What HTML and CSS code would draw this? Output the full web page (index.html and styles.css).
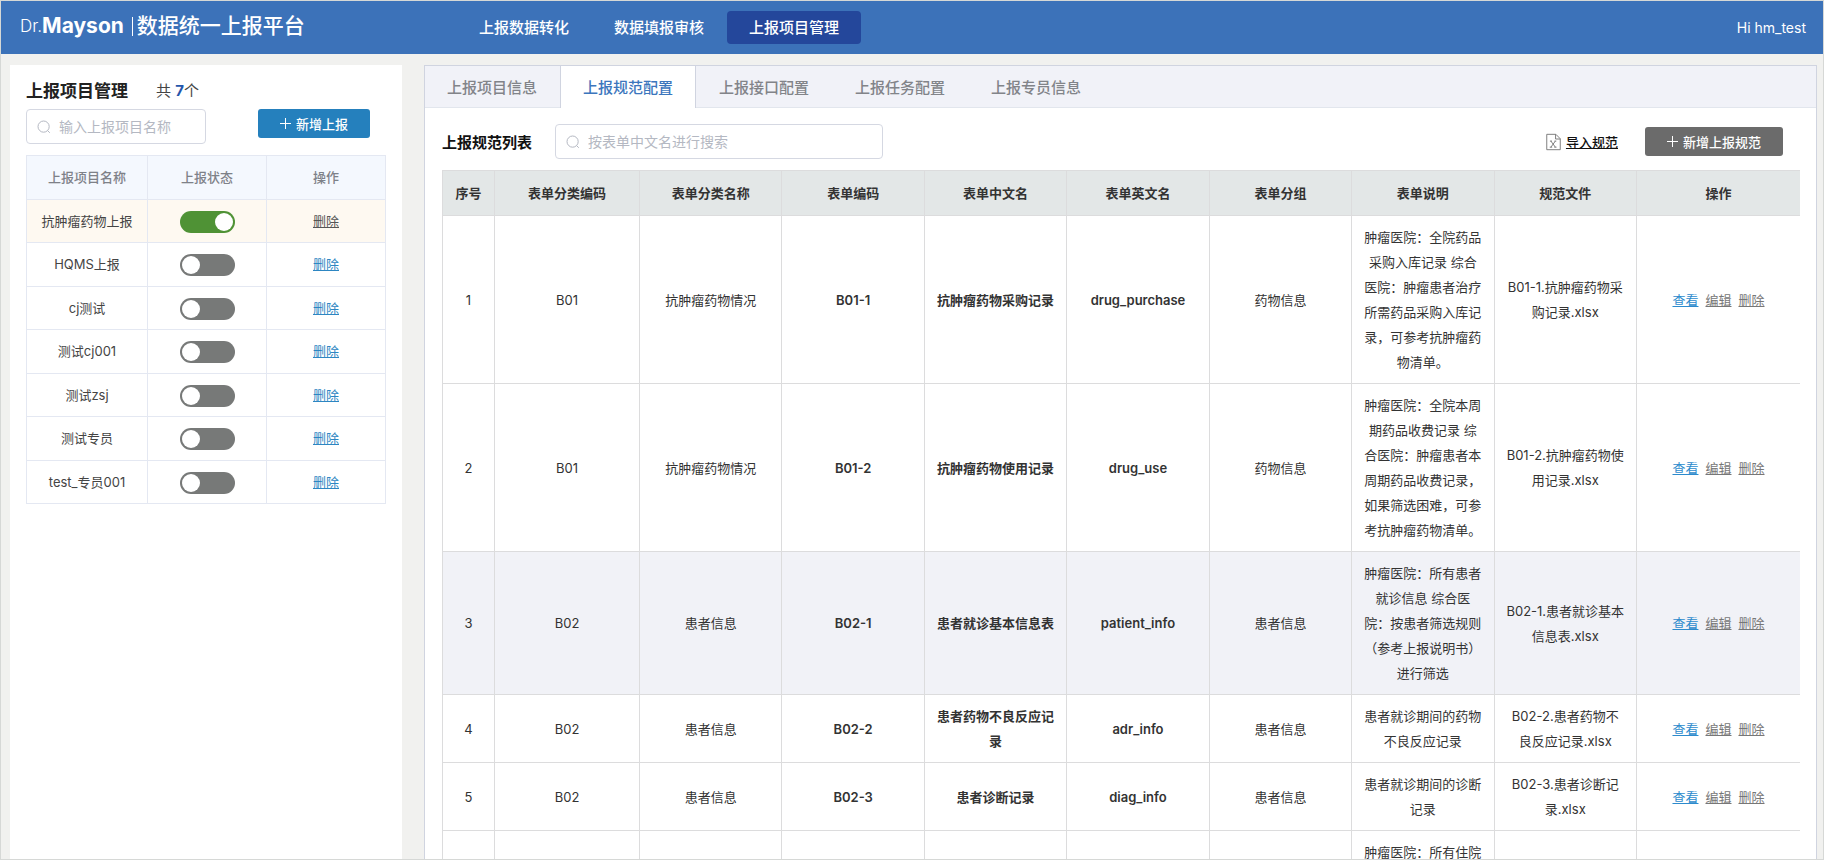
FILE: index.html
```html
<!DOCTYPE html>
<html lang="zh-CN">
<head>
<meta charset="utf-8">
<meta name="viewport" content="width=device-width, initial-scale=1">
<title>Dr.Mayson 数据统一上报平台</title>
<link rel="stylesheet" href="styles.css">
</head>
<body>
<div class="app">
  <header class="topbar">
    <div class="brand"><span class="brand-dr">Dr.</span><strong class="brand-name">Mayson</strong><span class="brand-line"></span><span class="brand-title">数据统一上报平台</span></div>
    <nav class="nav">
      <a class="nav-item" href="#">上报数据转化</a>
      <a class="nav-item" href="#">数据填报审核</a>
      <a class="nav-item nav-active" href="#">上报项目管理</a>
    </nav>
    <span class="user">Hi hm_test</span>
  </header>

  <div class="content">
    <aside class="side">
      <div class="side-head">
        <h1 class="side-title">上报项目管理</h1>
        <span class="side-count">共 <b class="num">7</b>个</span>
      </div>
      <div class="side-tools">
        <label class="search search-side">
          <svg class="search-icon" viewBox="0 0 14 14" aria-hidden="true"><circle cx="6.6" cy="6.6" r="5.6"/><path d="M10.6 10.6L12.8 12.8"/></svg>
          <input class="search-input" type="text" placeholder="输入上报项目名称" aria-label="输入上报项目名称">
        </label>
        <button class="btn btn-blue" type="button"><svg class="plus" viewBox="0 0 11 11" aria-hidden="true"><path d="M5.5 0V11M0 5.5H11"/></svg>新增上报</button>
      </div>
      <table class="projects">
        <colgroup><col class="p-name"><col><col></colgroup>
        <thead><tr><th>上报项目名称</th><th>上报状态</th><th>操作</th></tr></thead>
        <tbody>
          <tr class="current"><td>抗肿瘤药物上报</td><td><input class="switch" type="checkbox" checked aria-label="抗肿瘤药物上报"></td><td><a class="link" href="#">删除</a></td></tr>
          <tr><td>HQMS上报</td><td><input class="switch" type="checkbox" aria-label="HQMS上报"></td><td><a class="link" href="#">删除</a></td></tr>
          <tr><td>cj测试</td><td><input class="switch" type="checkbox" aria-label="cj测试"></td><td><a class="link" href="#">删除</a></td></tr>
          <tr><td>测试cj001</td><td><input class="switch" type="checkbox" aria-label="测试cj001"></td><td><a class="link" href="#">删除</a></td></tr>
          <tr><td>测试zsj</td><td><input class="switch" type="checkbox" aria-label="测试zsj"></td><td><a class="link" href="#">删除</a></td></tr>
          <tr><td>测试专员</td><td><input class="switch" type="checkbox" aria-label="测试专员"></td><td><a class="link" href="#">删除</a></td></tr>
          <tr><td>test_专员001</td><td><input class="switch" type="checkbox" aria-label="test_专员001"></td><td><a class="link" href="#">删除</a></td></tr>
        </tbody>
      </table>
    </aside>

    <main class="main">
      <div class="tabs" role="tablist">
        <button class="tab" type="button" role="tab">上报项目信息</button>
        <button class="tab tab-active" type="button" role="tab" aria-selected="true">上报规范配置</button>
        <button class="tab" type="button" role="tab">上报接口配置</button>
        <button class="tab" type="button" role="tab">上报任务配置</button>
        <button class="tab" type="button" role="tab">上报专员信息</button>
      </div>
      <div class="toolbar">
        <h2 class="list-title">上报规范列表</h2>
        <label class="search search-main">
          <svg class="search-icon" viewBox="0 0 14 14" aria-hidden="true"><circle cx="6.6" cy="6.6" r="5.6"/><path d="M10.6 10.6L12.8 12.8"/></svg>
          <input class="search-input" type="text" placeholder="按表单中文名进行搜索" aria-label="按表单中文名进行搜索">
        </label>
        <a class="import" href="#"><svg class="file-icon" viewBox="0 0 16 18" aria-hidden="true"><path d="M.8.8H10.5L15.2 5.5V17.2H.8ZM10.2.8V5.8H15.2"/><path d="M5.2 8L10 14.5M10 8L5.2 14.5M4 14.5H6.6M8.8 14.5H11.2M4.2 8H6.4M9 8H11"/></svg><span class="import-text">导入规范</span></a>
        <button class="btn btn-gray" type="button"><svg class="plus" viewBox="0 0 11 11" aria-hidden="true"><path d="M5.5 0V11M0 5.5H11"/></svg>新增上报规范</button>
      </div>
      <table class="specs">
        <colgroup><col class="s-index"><col class="s-code"><col><col><col><col><col><col><col><col class="s-ops"></colgroup>
        <thead><tr><th>序号</th><th>表单分类编码</th><th>表单分类名称</th><th>表单编码</th><th>表单中文名</th><th>表单英文名</th><th>表单分组</th><th>表单说明</th><th>规范文件</th><th>操作</th></tr></thead>
        <tbody>
          <tr><td>1</td><td>B01</td><td>抗肿瘤药物情况</td><td class="strong">B01-1</td><td class="strong">抗肿瘤药物采购记录</td><td class="strong">drug_purchase</td><td>药物信息</td><td>肿瘤医院：全院药品采购入库记录 综合医院：肿瘤患者治疗所需药品采购入库记录，可参考抗肿瘤药物清单。</td><td>B01-1.抗肿瘤药物采购记录.xlsx</td><td><div class="ops"><a class="view" href="#">查看</a><a href="#">编辑</a><a href="#">删除</a></div></td></tr>
          <tr><td>2</td><td>B01</td><td>抗肿瘤药物情况</td><td class="strong">B01-2</td><td class="strong">抗肿瘤药物使用记录</td><td class="strong">drug_use</td><td>药物信息</td><td>肿瘤医院：全院本周期药品收费记录 综合医院：肿瘤患者本周期药品收费记录，如果筛选困难，可参考抗肿瘤药物清单。</td><td>B01-2.抗肿瘤药物使用记录.xlsx</td><td><div class="ops"><a class="view" href="#">查看</a><a href="#">编辑</a><a href="#">删除</a></div></td></tr>
          <tr class="hovered"><td>3</td><td>B02</td><td>患者信息</td><td class="strong">B02-1</td><td class="strong">患者就诊基本信息表</td><td class="strong">patient_info</td><td>患者信息</td><td>肿瘤医院：所有患者就诊信息 综合医院：按患者筛选规则（参考上报说明书）进行筛选</td><td>B02-1.患者就诊基本信息表.xlsx</td><td><div class="ops"><a class="view" href="#">查看</a><a href="#">编辑</a><a href="#">删除</a></div></td></tr>
          <tr><td>4</td><td>B02</td><td>患者信息</td><td class="strong">B02-2</td><td class="strong">患者药物不良反应记录</td><td class="strong">adr_info</td><td>患者信息</td><td>患者就诊期间的药物不良反应记录</td><td>B02-2.患者药物不良反应记录.xlsx</td><td><div class="ops"><a class="view" href="#">查看</a><a href="#">编辑</a><a href="#">删除</a></div></td></tr>
          <tr><td>5</td><td>B02</td><td>患者信息</td><td class="strong">B02-3</td><td class="strong">患者诊断记录</td><td class="strong">diag_info</td><td>患者信息</td><td>患者就诊期间的诊断记录</td><td>B02-3.患者诊断记录.xlsx</td><td><div class="ops"><a class="view" href="#">查看</a><a href="#">编辑</a><a href="#">删除</a></div></td></tr>
          <tr><td></td><td></td><td></td><td></td><td></td><td></td><td></td><td>肿瘤医院：所有住院</td><td></td><td></td></tr>
        </tbody>
      </table>
    </main>
  </div>
</div>
</body>
</html>
```
FILE: styles.css
```css
* { box-sizing: border-box; }

body {
  margin: 0;
  font-family: Inter, "Noto Sans CJK SC", sans-serif;
  font-size: 13px;
  color: #333;
}

button, input { font-family: inherit; }

.app {
  display: flex;
  flex-direction: column;
  height: 100vh;
  overflow: hidden;
  border: 1px solid #d6d8d6;
  background: #f1f1ef;
}

/* Top bar */
.topbar {
  display: flex;
  align-items: center;
  flex: none;
  height: 53px;
  padding: 0 17px 0 19px;
  background: #3c72b9;
  color: #fff;
}

.brand {
  display: flex;
  align-items: center;
  width: 437px;
  padding-bottom: 3px;
  line-height: 28px;
}

.brand-dr { font-size: 17px; font-weight: 300; }
.brand-name { font-size: 21px; }
.brand-line { width: 1px; height: 19px; margin: 0 4px 0 8px; background: #fff; }
.brand-title { font-size: 21px; font-weight: 500; }

.nav { display: flex; flex: 1; gap: 1px; }

.nav-item {
  padding: 0 22px;
  border-radius: 4px;
  color: #fff;
  font-size: 15px;
  font-weight: 500;
  line-height: 33px;
  text-decoration: none;
}

.nav-active { background: #24479b; }
.user { font-size: 14px; }

/* Page body */
.content {
  display: flex;
  flex: 1;
  gap: 22px;
  min-height: 0;
  padding: 11px 6px 0 9px;
}

.side {
  flex: none;
  width: 392px;
  padding: 11px 16px 0;
  background: #fff;
}

.side-head {
  display: flex;
  align-items: center;
  gap: 28px;
  height: 26px;
}

.side-title { margin: 0; font-size: 17px; font-weight: 700; color: #222; }
.side-count { font-size: 15px; color: #444; }
.num { color: #2456ab; }

.side-tools {
  display: flex;
  align-items: flex-start;
  justify-content: space-between;
  margin-top: 7px;
  padding-right: 16px;
}

.search {
  display: flex;
  align-items: center;
  gap: 8px;
  height: 35px;
  padding: 0 10px;
  border: 1px solid #d5d8e2;
  border-radius: 4px;
  background: #fff;
}

.search-side { width: 180px; }
.search-main { width: 328px; }

.search-icon {
  flex: none;
  width: 14px;
  height: 14px;
  fill: none;
  stroke: #b4b8c2;
}

.search-input {
  flex: 1;
  min-width: 0;
  padding: 0;
  border: 0;
  outline: 0;
  background: none;
  font-size: 14px;
}

.search-input::placeholder { color: #b4b8c2; opacity: 1; }

.btn {
  display: flex;
  align-items: center;
  justify-content: center;
  gap: 5px;
  height: 29px;
  padding: 0 22px;
  border: 0;
  border-radius: 3px;
  color: #fff;
  font-size: 13px;
  font-weight: 500;
}

.btn-blue { background: #2580bd; }
.btn-gray { background: #6b6b6b; }
.plus { width: 11px; height: 11px; fill: none; stroke: #fff; }

/* Project table */
.projects {
  width: 100%;
  margin-top: 11px;
  border: 1px solid #e4e8f2;
  border-width: 1px 0 0 1px;
  border-spacing: 0;
  table-layout: fixed;
  text-align: center;
}

.p-name { width: 121px; }

.projects th, .projects td {
  height: 43px;
  padding: 0 0 2px;
  border: 1px solid #e4e8f2;
  border-width: 0 1px 1px 0;
}

.projects tr:nth-child(even) td, .projects th { height: 44px; }
.projects th { background: #f4f8fe; color: #7e8188; font-weight: 500; }
.projects .current td { background: #fef9f1; }
.projects td { color: #444; }

.switch {
  display: block;
  width: 55px;
  height: 22px;
  margin: 3px auto 0;
  padding: 2px;
  border-radius: 11px;
  background: #777978;
  appearance: none;
}

.switch::before {
  display: block;
  width: 18px;
  height: 18px;
  border-radius: 50%;
  background: #fff;
  content: "";
}

.switch:checked { background: #4f9235; }
.switch:checked::before { margin-left: auto; }
.link { color: #2d86c2; }
.current .link { color: #555; }

/* Main panel */
.main {
  flex: 1;
  min-width: 0;
  overflow: hidden;
  border: 1px solid #d0d4e0;
  border-bottom: 0;
  background: #fff;
}

.tabs {
  display: flex;
  height: 42px;
  border-bottom: 1px solid #e2e6ed;
  background: #f1f2f8;
}

.tab {
  height: 42px;
  padding: 0 22px 2px;
  border: 1px solid transparent;
  border-width: 0 1px;
  background: none;
  color: #828489;
  font-size: 15px;
  font-weight: 500;
}

.tab:first-child { margin-left: -1px; }
.tab-active { border-color: #d0d4e0; background: #fff; color: #3c76bd; }

.toolbar {
  display: flex;
  align-items: center;
  gap: 23px;
  padding: 16px 33px 11px 17px;
}

.list-title { margin: 0; font-size: 15px; font-weight: 700; color: #111; }

.import {
  display: flex;
  align-items: center;
  gap: 5px;
  margin-left: auto;
  color: #111;
  font-weight: 500;
}

.import-text { text-decoration: underline; }
.file-icon { width: 15px; height: 18px; fill: none; stroke: #777; }
.toolbar .btn { margin-left: 4px; }

/* Specification table */
.specs {
  width: calc(100% - 33px);
  margin: 0 16px 0 17px;
  border: 1px solid #dcdcdd;
  border-width: 1px 0 0 1px;
  border-spacing: 0;
  table-layout: fixed;
  line-height: 25px;
  text-align: center;
}

.s-index { width: 52px; }
.s-code { width: 145px; }
.s-ops { width: 163px; }

.specs th, .specs td {
  padding: 9px 11px 8px;
  border: 1px solid #dcdcdd;
  border-width: 0 1px 1px 0;
}

.specs th {
  height: 45px;
  padding: 0;
  background: #e3e7e7;
  font-weight: 700;
}

.specs tr > :last-child { border-right: 0; }
.specs .strong { font-weight: 600; }
.hovered td { background: #f1f2f7; }

.ops { display: flex; justify-content: center; gap: 7px; }
.ops a { color: #777; }
.ops .view { color: #2d8bcd; }
```
